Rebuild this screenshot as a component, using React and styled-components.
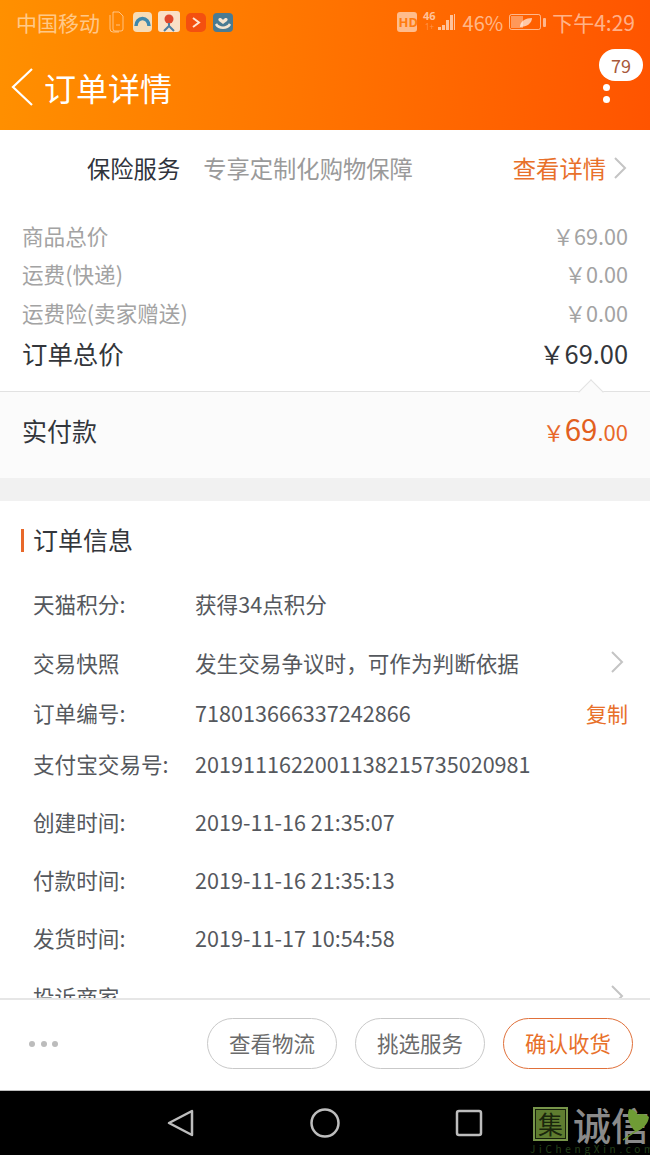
import styled, { createGlobalStyle } from 'styled-components';

const GlobalStyle = createGlobalStyle`
  html, body { margin: 0; padding: 0; background: #fff; }
  * { box-sizing: border-box; }
  body { font-family: "Noto Sans CJK SC", "Noto Sans", sans-serif; }
`;

const Page = styled.div`
  width: 650px;
  height: 1155px;
  display: flex;
  flex-direction: column;
  overflow: hidden;
`;

const Header = styled.header`
  height: 130px;
  flex: none;
  background: linear-gradient(95deg, #ff9000 0%, #ff7600 45%, #ff5400 100%);
`;

const StatusBar = styled.div`
  height: 44px;
  padding: 0 15px 0 16px;
  display: flex;
  align-items: center;
  color: rgba(255, 255, 255, 0.55);
  font-size: 21px;
`;

const StatusLeft = styled.div`
  display: flex;
  align-items: center;
  gap: 7px;
  flex: 1;
`;

const StatusRight = styled.div`
  display: flex;
  align-items: center;
  gap: 6px;
`;

const Percent = styled.span`
  font-size: 20px;
`;

const NavBar = styled.div`
  height: 86px;
  padding: 0 7px 0 11px;
  display: flex;
  align-items: flex-start;
`;

const BackButton = styled.svg`
  width: 24px;
  height: 40px;
  margin-top: 24px;
  flex: none;
`;

const Title = styled.h1`
  margin: 20px 0 0 9px;
  font-size: 32px;
  line-height: 46px;
  font-weight: 400;
  color: #fff;
  flex: 1;
`;

const MoreMenu = styled.div`
  width: 44px;
  display: flex;
  flex-direction: column;
  align-items: flex-start;
  margin-top: 5px;
`;

const Badge = styled.span`
  width: 44px;
  height: 32px;
  border-radius: 16px;
  background: #fff;
  color: #a8583a;
  font-size: 18px;
  line-height: 32px;
  text-align: center;
`;

const Dot = styled.i`
  width: 7px;
  height: 7px;
  border-radius: 50%;
  background: #fff;
  margin: 3px 0 2px 4px;
`;

const Insurance = styled.div`
  height: 80px;
  flex: none;
  padding: 0 23px 4px 87px;
  display: flex;
  align-items: center;
  font-size: 23.3px;
`;

const InsuranceName = styled.span`
  color: #30343c;
`;

const InsuranceDesc = styled.span`
  color: #9a9a9a;
  margin-left: 23px;
  flex: 1;
`;

const InsuranceLink = styled.span`
  color: #e8702a;
`;

const Chevron = styled.svg`
  width: 14px;
  height: 22px;
  flex: none;
  margin-left: 7px;
  margin-right: ${(p) => p.$inset || 0}px;
`;

const Prices = styled.div`
  flex: none;
  height: 181px;
  padding: 6px 22px 0;
`;

const PriceRow = styled.div`
  display: flex;
  justify-content: space-between;
  align-items: center;
  height: ${(p) => (p.$strong ? '42px' : '38.5px')};
  color: ${(p) => (p.$strong ? '#33363b' : '#a3a3a3')};
  font-size: ${(p) => (p.$strong ? '25.4px' : '21.6px')};
`;

const Paid = styled.div`
  flex: none;
  height: 87px;
  background: #fbfbfb;
  border-top: 1px solid #e2e2e2;
  padding: 0 22px 10px;
  display: flex;
  justify-content: space-between;
  align-items: center;
  font-size: 25px;
  color: #33363b;
  position: relative;
  &::before {
    content: '';
    position: absolute;
    top: -9px;
    right: 50px;
    width: 17px;
    height: 17px;
    background: #fbfbfb;
    border-top: 1px solid #e2e2e2;
    border-left: 1px solid #e2e2e2;
    transform: rotate(45deg);
  }
`;

const PaidAmount = styled.span`
  color: #e8682a;
  font-size: 22px;
  margin-bottom: 4px;
  b {
    font-weight: 400;
    font-size: 29.5px;
    color: #e2601f;
  }
`;

const Gap = styled.div`
  flex: none;
  height: 23px;
  background: #f1f1f1;
`;

const Info = styled.section`
  flex: 1;
  min-height: 0;
  overflow: hidden;
`;

const SectionTitle = styled.h2`
  margin: 28px 0 22px 21px;
  padding-left: 9px;
  height: 23px;
  border-left: 3px solid #e8682a;
  font-size: 25px;
  line-height: 21px;
  font-weight: 400;
  color: #33363b;
`;

const InfoRow = styled.div`
  height: ${(p) => p.$h}px;
  padding: 0 22px 0 33px;
  display: flex;
  align-items: center;
  font-size: 21.6px;
  color: #55585d;
`;

const InfoLabel = styled.span`
  width: 162px;
  flex: none;
`;

const InfoValue = styled.span`
  flex: 1;
  white-space: nowrap;
`;

const CopyLink = styled.span`
  color: #e8702a;
  font-size: 21px;
`;

const Footer = styled.footer`
  flex: none;
  height: 93px;
  background: #fff;
  border-top: 2px solid #e6e6e6;
  border-bottom: 1px solid #bdbdbd;
  padding: 0 17px 4px 29px;
  display: flex;
  align-items: center;
  gap: 18px;
`;

const MoreDots = styled.div`
  display: flex;
  gap: 5.5px;
  flex: 1;
  margin-top: 2px;
  i {
    width: 6px;
    height: 6px;
    border-radius: 50%;
    background: #bcbcbc;
  }
`;

const PillButton = styled.button`
  width: 130px;
  height: 51px;
  border-radius: 26px;
  background: #fff;
  border: 1px solid ${(p) => (p.$primary ? '#e0703a' : '#c9c9c9')};
  color: ${(p) => (p.$primary ? '#e8702a' : '#6b6b6b')};
  font-family: inherit;
  font-size: 21.5px;
  padding: 0 0 2px;
`;

const SystemNav = styled.nav`
  flex: none;
  height: 64px;
  background: #000;
  display: flex;
  align-items: center;
  padding-left: 165px;
  gap: 115px;
  position: relative;
`;

const Watermark = styled.div`
  position: absolute;
  left: 533px;
  top: 16px;
  width: 117px;
  height: 48px;
  display: flex;
  flex-wrap: wrap;
  align-content: flex-start;
`;

const WatermarkSeal = styled.span`
  width: 35px;
  height: 34px;
  background: #5f7d30;
  border: 2px solid #77954a;
  box-shadow: inset 0 0 0 1px #16200a;
  color: #1a260c;
  font-size: 25px;
  line-height: 29px;
  text-align: center;
`;

const WatermarkName = styled.span`
  color: #8a8a8a;
  font-size: 38px;
  font-weight: 500;
  line-height: 34px;
  margin-left: 5px;
  width: 77px;
  white-space: nowrap;
`;

const WatermarkLeaf = styled.svg`
  position: absolute;
  left: 87px;
  top: 0;
  width: 30px;
  height: 34px;
`;

const WatermarkDomain = styled.span`
  width: 120px;
  margin: 2px 0 0 -3px;
  color: #24401a;
  font-size: 10px;
  letter-spacing: 3.7px;
  line-height: 11px;
  white-space: nowrap;
`;

const prices = [
  ['商品总价', '￥69.00'],
  ['运费(快递)', '￥0.00'],
  ['运费险(卖家赠送)', '￥0.00'],
];

const ChevronIcon = ({ inset }) => (
  <Chevron viewBox="0 0 14 22" $inset={inset}>
    <path d="M2 1l10 10L2 21" fill="none" stroke="#c4c4c4" strokeWidth="2" />
  </Chevron>
);

const AppIcons = () => (
  <svg width="126" height="24" viewBox="0 0 126 24">
    <g fill="none" stroke="rgba(255,255,255,.5)" strokeWidth="1">
      <path d="M6 2h6l4 4v13a2 2 0 0 1-2 2H8a2 2 0 0 1-2-2z" />
      <path d="M3 5v14a3 3 0 0 0 3 3h6" />
      <path d="M9 15h4" />
    </g>
    <rect x="26" y="2" width="19" height="20" rx="4" fill="#f6dcb8" />
    <path d="M29 16a6.500 7.500 0 0 1 13 0" fill="none" stroke="#3f88ad" strokeWidth="3.500" />
    <rect x="51" y="1" width="22" height="21" rx="3" fill="#fae0c6" />
    <circle cx="62" cy="9" r="4.500" fill="#e0482c" />
    <path d="M62 13v4M57 21l5-5 5 5" stroke="#4f7ea0" strokeWidth="2" fill="none" />
    <rect x="79" y="3" width="20" height="19" rx="5" fill="#f4500f" />
    <path d="M86 8l6 4.500-6 4.500" fill="none" stroke="#ffe6d0" strokeWidth="2" />
    <rect x="106" y="3" width="20" height="19" rx="4" fill="#4a7b92" />
    <path d="M116 10c-3-4-6-1-4 1l4 3 4-3c2-2-1-5-4-1z" fill="#f6e5cf" />
    <path d="M109 14c3 5 11 5 14 0" stroke="#f6e5cf" strokeWidth="2.500" fill="none" />
  </svg>
);

const SignalIcons = () => (
  <svg width="60" height="26" viewBox="0 0 60 26">
    <rect x="0" y="3" width="20" height="20" rx="3" fill="rgba(255,255,255,.55)" />
    <text x="1.500" y="18" fontSize="13" fontWeight="700" fontFamily="Noto Sans" fill="#ff7c10">HD</text>
    <text x="26" y="11" fontSize="11" fontWeight="700" fontFamily="Noto Sans" fill="rgba(255,255,255,.6)">46</text>
    <text x="28" y="21" fontSize="8" fontFamily="Noto Sans" fill="rgba(255,255,255,.3)">1+</text>
    <g fill="rgba(255,255,255,.6)">
      <rect x="41" y="18" width="3" height="3" />
      <rect x="45" y="16" width="3" height="5" />
      <rect x="49" y="11" width="3" height="10" />
      <rect x="53" y="6" width="3" height="15" />
      <rect x="57" y="5" width="1" height="16" />
    </g>
  </svg>
);

const BatteryIcon = () => (
  <svg width="37" height="18" viewBox="0 0 37 18">
    <rect x="0.500" y="1.500" width="31" height="15" rx="2" fill="none" stroke="rgba(255,255,255,.55)" />
    <rect x="2" y="3" width="12" height="12" fill="rgba(255,255,255,.35)" />
    <path d="M11 14c0-6 6-9 12-9 0 5-5 9-12 9z" fill="rgba(255,255,255,.65)" />
    <rect x="34" y="5" width="3" height="9" rx="1" fill="rgba(255,255,255,.55)" />
  </svg>
);

export default function App() {
  return (
    <Page>
      <GlobalStyle />
      <Header>
        <StatusBar>
          <StatusLeft>
            中国移动
            <AppIcons />
          </StatusLeft>
          <StatusRight>
            <SignalIcons />
            <Percent>46%</Percent>
            <BatteryIcon />
            下午4:29
          </StatusRight>
        </StatusBar>
        <NavBar>
          <BackButton viewBox="0 0 24 40">
            <path d="M21 1L2 19l19 18" fill="none" stroke="#fff" strokeWidth="2.200" />
          </BackButton>
          <Title>订单详情</Title>
          <MoreMenu>
            <Badge>79</Badge>
            <Dot />
            <Dot />
          </MoreMenu>
        </NavBar>
      </Header>

      <Insurance>
        <InsuranceName>保险服务</InsuranceName>
        <InsuranceDesc>专享定制化购物保障</InsuranceDesc>
        <InsuranceLink>查看详情</InsuranceLink>
        <ChevronIcon />
      </Insurance>

      <Prices>
        {prices.map(([label, value]) => (
          <PriceRow key={label}>
            <span>{label}</span>
            <span>{value}</span>
          </PriceRow>
        ))}
        <PriceRow $strong>
          <span>订单总价</span>
          <span>￥69.00</span>
        </PriceRow>
      </Prices>

      <Paid>
        实付款
        <PaidAmount>
          ￥<b>69</b>.00
        </PaidAmount>
      </Paid>
      <Gap />

      <Info>
        <SectionTitle>订单信息</SectionTitle>
        <InfoRow $h={59}>
          <InfoLabel>天猫积分:</InfoLabel>
          <InfoValue>获得34点积分</InfoValue>
        </InfoRow>
        <InfoRow $h={58}>
          <InfoLabel>交易快照</InfoLabel>
          <InfoValue>发生交易争议时，可作为判断依据</InfoValue>
          <ChevronIcon inset={4} />
        </InfoRow>
        <InfoRow $h={43}>
          <InfoLabel>订单编号:</InfoLabel>
          <InfoValue>718013666337242866</InfoValue>
          <CopyLink>复制</CopyLink>
        </InfoRow>
        <InfoRow $h={58}>
          <InfoLabel>支付宝交易号:</InfoLabel>
          <InfoValue>2019111622001138215735020981</InfoValue>
        </InfoRow>
        <InfoRow $h={58}>
          <InfoLabel>创建时间:</InfoLabel>
          <InfoValue>2019-11-16 21:35:07</InfoValue>
        </InfoRow>
        <InfoRow $h={58}>
          <InfoLabel>付款时间:</InfoLabel>
          <InfoValue>2019-11-16 21:35:13</InfoValue>
        </InfoRow>
        <InfoRow $h={59}>
          <InfoLabel>发货时间:</InfoLabel>
          <InfoValue>2019-11-17 10:54:58</InfoValue>
        </InfoRow>
        <InfoRow $h={58}>
          <InfoLabel>投诉商家</InfoLabel>
          <InfoValue />
          <ChevronIcon inset={4} />
        </InfoRow>
      </Info>

      <Footer>
        <MoreDots>
          <i />
          <i />
          <i />
        </MoreDots>
        <PillButton>查看物流</PillButton>
        <PillButton>挑选服务</PillButton>
        <PillButton $primary>确认收货</PillButton>
      </Footer>

      <SystemNav>
        <svg width="30" height="30" viewBox="0 0 30 30">
          <path d="M27 3v24L4 15z" fill="none" stroke="#bdbdbd" strokeWidth="2.500" strokeLinejoin="round" />
        </svg>
        <svg width="30" height="30" viewBox="0 0 30 30">
          <circle cx="15" cy="15" r="13.500" fill="none" stroke="#bdbdbd" strokeWidth="2.500" />
        </svg>
        <svg width="28" height="28" viewBox="0 0 28 28">
          <rect x="2" y="2" width="24" height="24" rx="2" fill="none" stroke="#bdbdbd" strokeWidth="2.500" />
        </svg>
        <Watermark>
          <WatermarkSeal>集</WatermarkSeal>
          <WatermarkName>诚信</WatermarkName>
          <WatermarkLeaf viewBox="0 0 30 34">
            <path d="M9 2c4 0 7 2 9 6 3-2 8-1 11 2-1 7-6 12-13 15C10 20 6 10 9 2z" fill="#6f9c35" />
            <path d="M16 24L3 33" stroke="#6f9c35" strokeWidth="1.500" fill="none" />
          </WatermarkLeaf>
          <WatermarkDomain>JiChengXin.com</WatermarkDomain>
        </Watermark>
      </SystemNav>
    </Page>
  );
}
